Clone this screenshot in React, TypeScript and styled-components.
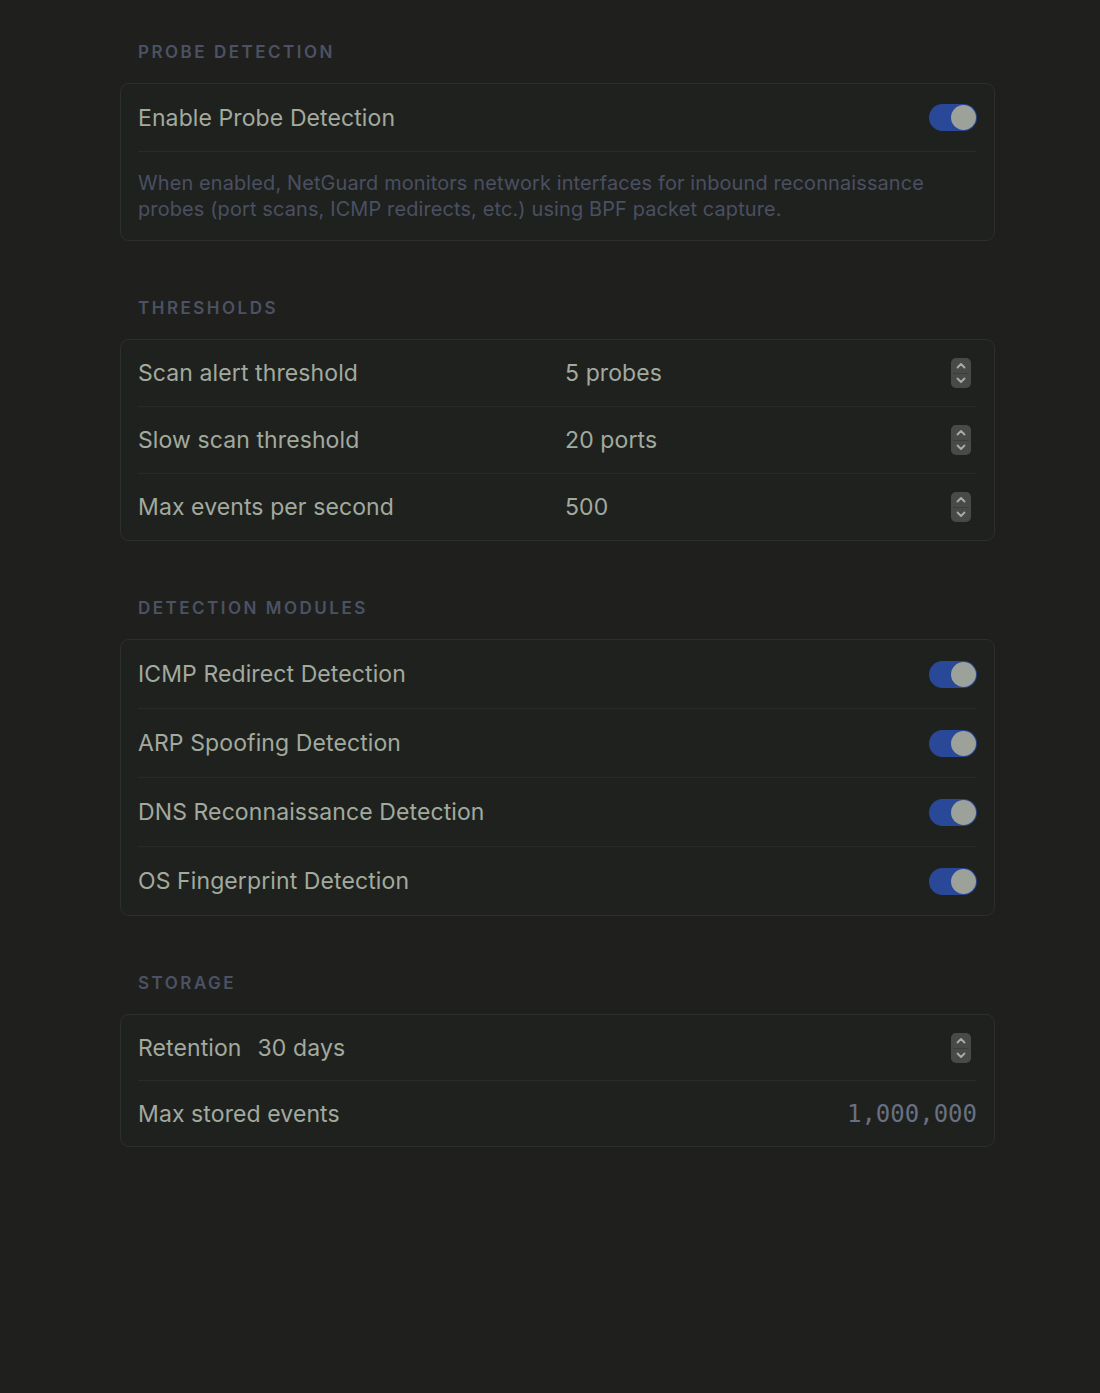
import React from "react";
import styled, { createGlobalStyle } from "styled-components";

const GlobalStyle = createGlobalStyle`
  html, body {
    margin: 0;
    padding: 0;
    background: #1f201e;
  }
  body {
    font-family: Inter, "Noto Sans", "Liberation Sans", sans-serif;
    -webkit-font-smoothing: antialiased;
  }
`;

const Page = styled.main`
  min-height: 1393px;
  box-sizing: border-box;
  padding: 41px 105px 0 120px;
  display: flex;
  flex-direction: column;
  gap: 56px;
`;

const Section = styled.section`
  display: flex;
  flex-direction: column;
  gap: 20px;
`;

const SectionTitle = styled.h2`
  margin: 0 0 0 18px;
  height: 22px;
  line-height: 22px;
  font-size: 17px;
  font-weight: 600;
  letter-spacing: 2.5px;
  color: #4c5263;
  text-transform: uppercase;
`;

const Card = styled.div`
  background: #1f211f;
  border: 1px solid #2d2f2c;
  border-radius: 9px;
  padding: 0 17px;
`;

const Row = styled.div<{ $grid?: boolean; $h: number }>`
  display: ${(p) => (p.$grid ? "grid" : "flex")};
  grid-template-columns: 427px 1fr auto;
  align-items: center;
  gap: ${(p) => (p.$grid ? "0" : "16px")};
  min-height: ${(p) => p.$h}px;
  & + & {
    border-top: 1px solid #292b28;
  }
`;

const Label = styled.span`
  font-size: 23px;
  font-weight: 400;
  color: #a2aa9e;
  letter-spacing: 0.1px;
`;

const Value = styled.span`
  font-size: 23px;
  color: #a2aa9e;
  letter-spacing: 0.1px;
`;

const Spacer = styled.div`
  flex: 1;
`;

const MonoValue = styled.span`
  font-family: "DejaVu Sans Mono", "Liberation Mono", monospace;
  font-size: 24px;
  color: #687082;
`;

const Description = styled.p`
  margin: 0;
  padding: 18px 0 18px;
  border-top: 1px solid #292b28;
  font-size: 19.9px;
  line-height: 26px;
  letter-spacing: 0.15px;
  color: #4a5062;
`;

const Track = styled.span<{ $on: boolean }>`
  width: 48px;
  height: 27px;
  border-radius: 14px;
  background: ${(p) => (p.$on ? "#2a4898" : "#3a3c39")};
  display: flex;
  align-items: center;
  justify-content: ${(p) => (p.$on ? "flex-end" : "flex-start")};
  padding: 0 1px;
  box-sizing: border-box;
  flex-shrink: 0;
`;

const Knob = styled.span`
  width: 25px;
  height: 25px;
  border-radius: 50%;
  background: #9ca19a;
`;

const StepperBox = styled.span`
  width: 20px;
  height: 30px;
  margin-right: 6px;
  border-radius: 5px;
  background: #474a46;
  display: flex;
  flex-direction: column;
  justify-content: space-between;
  align-items: center;
  padding: 3px 0;
  box-sizing: border-box;
  position: relative;
  &::after {
    content: "";
    position: absolute;
    left: 2px;
    right: 2px;
    top: 50%;
    height: 1px;
    background: #3c3e3b;
  }
`;

const Chevron = ({ up }: { up?: boolean }) => (
  <svg width="12" height="9" viewBox="0 0 12 9">
    <path
      d={up ? "M2.5 6.5 L6 3 L9.5 6.5" : "M2.5 2.5 L6 6 L9.5 2.5"}
      fill="none"
      stroke="#a7aea3"
      strokeWidth="1.8"
      strokeLinecap="round"
      strokeLinejoin="round"
    />
  </svg>
);

const Stepper = () => (
  <StepperBox>
    <Chevron up />
    <Chevron />
  </StepperBox>
);

const Toggle = ({ on }: { on: boolean }) => (
  <Track $on={on}>
    <Knob />
  </Track>
);

const thresholds = [
  { label: "Scan alert threshold", value: "5 probes" },
  { label: "Slow scan threshold", value: "20 ports" },
  { label: "Max events per second", value: "500" },
];

const modules = [
  "ICMP Redirect Detection",
  "ARP Spoofing Detection",
  "DNS Reconnaissance Detection",
  "OS Fingerprint Detection",
];

export default function App() {
  return (
    <>
      <GlobalStyle />
      <Page>
        <Section>
          <SectionTitle>Probe Detection</SectionTitle>
          <Card>
            <Row $h={67}>
              <Label>Enable Probe Detection</Label>
              <Spacer />
              <Toggle on />
            </Row>
            <Description>
              When enabled, NetGuard monitors network interfaces for inbound reconnaissance
              <br />
              probes (port scans, ICMP redirects, etc.) using BPF packet capture.
            </Description>
          </Card>
        </Section>

        <Section>
          <SectionTitle>Thresholds</SectionTitle>
          <Card>
            {thresholds.map((t) => (
              <Row $grid $h={66} key={t.label}>
                <Label>{t.label}</Label>
                <Value>{t.value}</Value>
                <Stepper />
              </Row>
            ))}
          </Card>
        </Section>

        <Section>
          <SectionTitle>Detection Modules</SectionTitle>
          <Card>
            {modules.map((m) => (
              <Row $h={68} key={m}>
                <Label>{m}</Label>
                <Spacer />
                <Toggle on />
              </Row>
            ))}
          </Card>
        </Section>

        <Section>
          <SectionTitle>Storage</SectionTitle>
          <Card>
            <Row $h={65}>
              <Label>Retention</Label>
              <Value>30 days</Value>
              <Spacer />
              <Stepper />
            </Row>
            <Row $h={65}>
              <Label>Max stored events</Label>
              <Spacer />
              <MonoValue>1,000,000</MonoValue>
            </Row>
          </Card>
        </Section>
      </Page>
    </>
  );
}
